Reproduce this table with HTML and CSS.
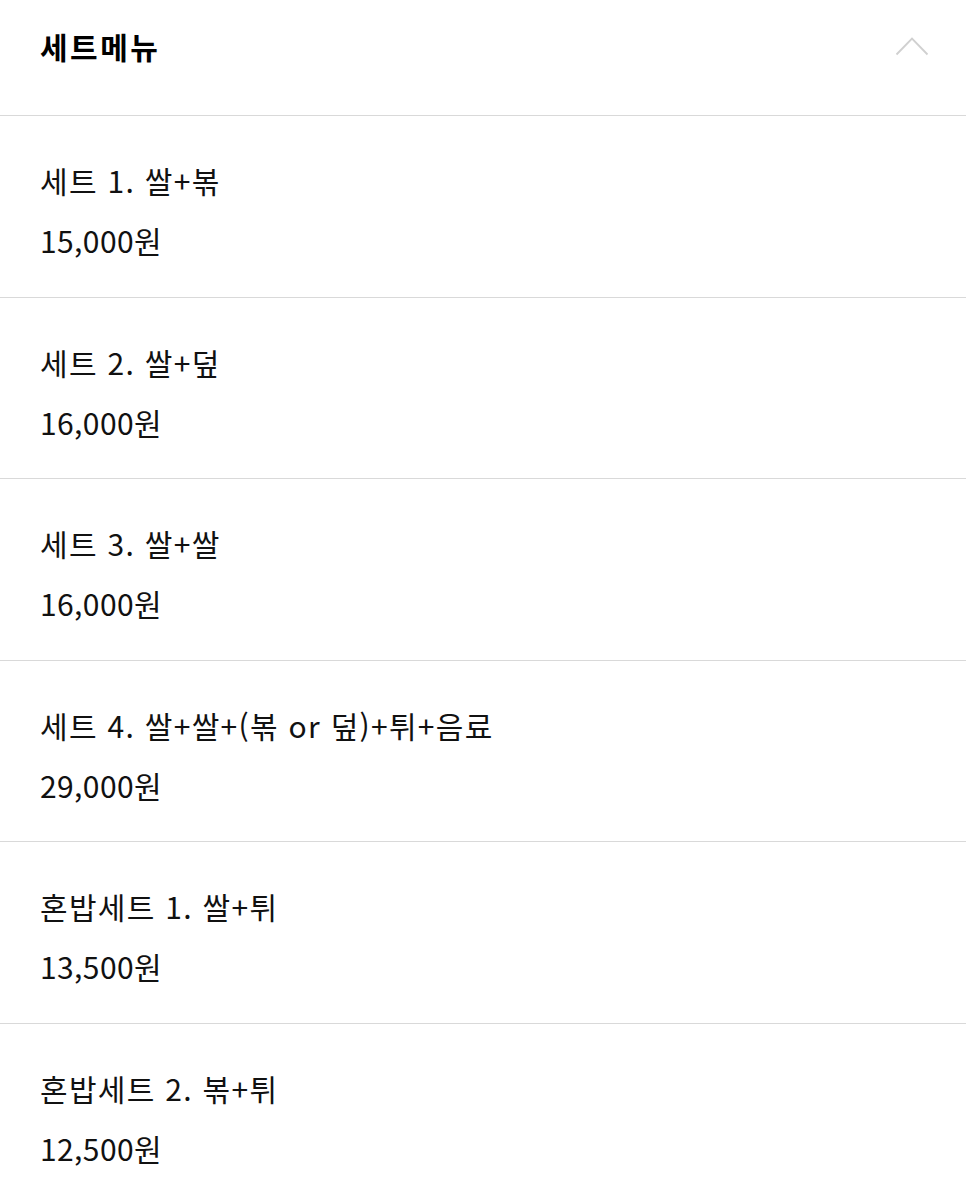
FILE: index.html
```html
<!DOCTYPE html>
<html lang="ko">
<head>
<meta charset="utf-8">
<title>세트메뉴</title>
<link rel="stylesheet" href="styles.css">
</head>
<body>
<section class="menu">
  <header class="menu-head">
    <h2 class="menu-title">세트메뉴</h2>
    <svg class="chevron" width="34" height="20" viewBox="0 0 34 20" aria-hidden="true">
      <polyline points="1.5,18.5 17,2.5 32.5,18.5" fill="none" stroke="#d0d0d0" stroke-width="1.8"/>
    </svg>
  </header>
  <ul class="menu-list">
    <li class="item"><p class="name">세트 1. 쌀+볶</p><p class="price">15,000원</p></li>
    <li class="item"><p class="name">세트 2. 쌀+덮</p><p class="price">16,000원</p></li>
    <li class="item"><p class="name">세트 3. 쌀+쌀</p><p class="price">16,000원</p></li>
    <li class="item"><p class="name">세트 4. 쌀+쌀+(볶 or 덮)+튀+음료</p><p class="price">29,000원</p></li>
    <li class="item"><p class="name">혼밥세트 1. 쌀+튀</p><p class="price">13,500원</p></li>
    <li class="item"><p class="name">혼밥세트 2. 볶+튀</p><p class="price">12,500원</p></li>
  </ul>
</section>
</body>
</html>
```
FILE: styles.css
```css
html, body {
  margin: 0;
  padding: 0;
  background: #ffffff;
}
body {
  font-family: "Noto Sans CJK KR", "Noto Sans", sans-serif;
  color: #111111;
}
.menu-head {
  display: flex;
  align-items: center;
  justify-content: space-between;
  height: 116px;
  padding: 0 37px 24px 40px;
  box-sizing: border-box;
  border-bottom: 1px solid #d9d9d9;
}
.menu-title {
  margin: 0;
  font-size: 30px;
  font-weight: 700;
  letter-spacing: 2.5px;
  line-height: 60px;
  color: #000;
}
.chevron {
  display: block;
}
.menu-list {
  list-style: none;
  margin: 0;
  padding: 0;
}
.item {
  padding: 34px 40px 26.6px;
  border-bottom: 1px solid #d9d9d9;
}
.item:last-child {
  border-bottom: none;
}
.name, .price {
  margin: 0;
  font-size: 30px;
  line-height: 60px;
  font-weight: 400;
  color: #111;
}
.name {
  letter-spacing: 1.3px;
}
.price {
  letter-spacing: 0.4px;
}
```
